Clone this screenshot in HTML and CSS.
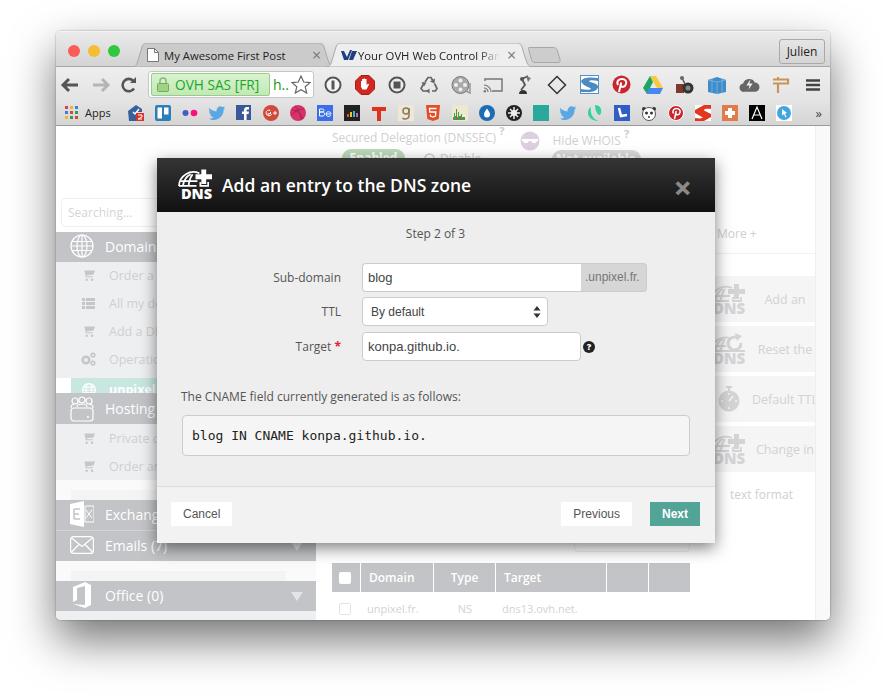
FILE: index.html
```html
<!DOCTYPE html>
<html lang="en">

<head>
    <meta charset="UTF-8">
    <meta name="viewport" content="width=device-width, initial-scale=1.0">
    <title>Your OVH Web Control Panel</title>
    <link rel="stylesheet" href="styles.css">
</head>

<body>
    <svg class="defs" width="0" height="0">
        <symbol id="cart" viewBox="0 0 14 14">
            <path d="M0 1.5h2.6l1.5 7.5h7.4l.4-1.2H5.2L5 6.8l7.4-.8L14 1.5H3.2z" fill="currentColor"/>
            <circle cx="5" cy="11.5" r="1.3" fill="currentColor"/>
            <circle cx="10.8" cy="11.5" r="1.3" fill="currentColor"/>
        </symbol>
        <symbol id="dns" viewBox="0 0 36 32">
            <path d="M1 18a15 15 0 0 1 21-13M1 18h18M5 18c1-6 4-10 8-12M11 18c0-5 2-9 4-12M3 13h17" fill="none" stroke="currentColor" stroke-width="1.8"/>
            <path d="M24 1h5v5h6v5h-6v5h-5v-5h-6V6h6z" fill="currentColor"/>
            <path d="M23 14v4h8v-4" fill="none" stroke="currentColor" stroke-width="1.8"/>
            <text class="dns-word" x="3" y="31">DNS</text>
        </symbol>
        <symbol id="dnsreset" viewBox="0 0 36 32">
            <path d="M1 18a15 15 0 0 1 19-13M1 18h34M5 18c1-6 4-10 8-12M11 18c0-5 2-9 4-12M3 13h13" fill="none" stroke="currentColor" stroke-width="1.8"/>
            <path d="M31 10a6.500 6.500 0 1 1-3-5" fill="none" stroke="currentColor" stroke-width="3"/>
            <path d="M25 0l7 3-5 5z" fill="currentColor"/>
            <text class="dns-word" x="3" y="31">DNS</text>
        </symbol>
    </svg>

    <div class="window">
        <div class="tabstrip">
            <div class="lights">
                <span class="light red"></span>
                <span class="light yellow"></span>
                <span class="light green"></span>
            </div>
            <div class="tab tab-off">
                <svg class="tab-shape" viewBox="0 0 203 24" preserveAspectRatio="none"><path d="M0 24C5 24 5 20 7 14L10 4C11 1 12 0 16 0H186C190 0 191 1 192 4L195 14C197 20 198 24 203 24Z" fill="#cbcbcb" stroke="#a8a8a8"/></svg>
                <svg class="tab-icon" width="12" height="14" viewBox="0 0 12 14"><path d="M.5.5h7l4 4v9H.5z" fill="#fff" stroke="#777"/><path d="M7.500.5v4h4" fill="none" stroke="#777"/></svg>
                <span class="tab-title">My Awesome First Post</span>
                <span class="tab-close">×</span>
            </div>
            <div class="tab tab-on">
                <svg class="tab-shape" viewBox="0 0 207 24" preserveAspectRatio="none"><path d="M0 24C5 24 5 20 7 14L10 4C11 1 12 0 16 0H190C194 0 195 1 196 4L199 14C201 20 202 24 207 24Z" fill="#eeeeee" stroke="#a8a8a8"/></svg>
                <svg class="tab-icon ovh" width="16" height="10" viewBox="0 0 16 10"><path d="M0 1h3l3 6 3-7h2L7 10H3zM11 1h5l-4 9H8z" fill="#1f3f80"/></svg>
                <span class="tab-title fade">Your OVH Web Control Pan</span>
                <span class="tab-close">×</span>
            </div>
            <svg class="newtab" width="33" height="17" viewBox="0 0 33 17"><path d="M1 1.500h24c2 0 3 .5 4 2l3 10c.5 2 0 3-2 3H7c-2 0-3-1-3.500-2.500L.5 3c-.5-1 0-1.500.5-1.500z" fill="#cdcdcd" stroke="#a8a8a8"/></svg>
            <div class="user">Julien</div>
        </div>

        <div class="toolbar">
            <svg class="nav" width="20" height="16" viewBox="0 0 20 16"><path d="M9 2L3 8l6 6M3 8h15" fill="none" stroke="#555" stroke-width="3"/></svg>
            <svg class="nav" width="20" height="16" viewBox="0 0 20 16"><path d="M11 2l6 6-6 6M17 8H2" fill="none" stroke="#b5b5b5" stroke-width="3"/></svg>
            <svg class="nav" width="18" height="16" viewBox="0 0 18 16"><path d="M14 11.500A6.200 6.200 0 1 1 13.500 4" fill="none" stroke="#555" stroke-width="2.600"/><path d="M10 6h6V0z" fill="#555"/></svg>
            <div class="omnibox">
                <div class="ev">
                    <svg width="12" height="15" viewBox="0 0 12 15"><path d="M3 7V4a3 3 0 0 1 6 0v3" fill="none" stroke="#8db57a" stroke-width="1.500"/><rect x=".5" y="6.500" width="11" height="8" rx="1" fill="#9fd383" stroke="#76a85f"/></svg>
                    <span>OVH SAS [FR]</span>
                </div>
                <span class="url">h..</span>
                <svg class="star" width="20" height="19" viewBox="0 0 20 19"><path d="M10 1l2.700 6 6.300.6-4.800 4.200 1.500 6.200-5.700-3.300L4.300 18l1.500-6.200L1 7.600 7.300 7z" fill="#fff" stroke="#666" stroke-width="1.200"/></svg>
            </div>
            <div class="extensions">
                <span class="ext"><svg width="18" height="18" viewBox="0 0 18 18"><circle cx="9" cy="9" r="7.500" fill="#f4f4f4" stroke="#555" stroke-width="2"/><path d="M7.500 4.500h3v9h-3z" fill="#555"/></svg></span>
                <span class="ext"><svg width="20" height="20" viewBox="0 0 20 20"><path d="M6 .5h8L19.500 6v8L14 19.500H6L.5 14V6z" fill="#d3261e" stroke="#a81d17"/><path d="M6 9V6l1 0v3-5h1.500v5-5.500H10V9 4h1.500v6l1.500-1.500 1 1-2.500 5H7.500L6 12z" fill="#fff"/></svg></span>
                <span class="ext"><svg width="18" height="18" viewBox="0 0 18 18"><circle cx="9" cy="9" r="7.500" fill="#eee" stroke="#555" stroke-width="2"/><rect x="5.500" y="5.500" width="7" height="7" fill="#555"/></svg></span>
                <span class="ext"><svg width="18" height="18" viewBox="0 0 18 18"><g fill="none" stroke="#666" stroke-width="1.700"><path d="M5 6l3-4.500h3l2 3.500"/><path d="M14.500 7.500l2.500 5-1.500 2.500H12"/><path d="M8 15H3l-2-2.500L3.500 8"/></g><path d="M15 2.500l-.5 5-4.500-2zM9.500 12.500v5L6 15zM1.500 6l5 .5-2.500 4z" fill="#666"/></svg></span>
                <span class="ext"><svg width="20" height="20" viewBox="0 0 20 20"><circle cx="9.500" cy="10" r="8.500" fill="#aaa" stroke="#777"/><circle cx="9.500" cy="5.500" r="2" fill="#eee"/><circle cx="5" cy="10" r="2" fill="#eee"/><circle cx="14" cy="10" r="2" fill="#eee"/><circle cx="9.500" cy="14.500" r="2" fill="#eee"/><path d="M15 16l4 2V8" fill="none" stroke="#999" stroke-width="1.500"/></svg></span>
                <span class="ext"><svg width="20" height="16" viewBox="0 0 20 16"><path d="M2 4V2h17v12H9" fill="none" stroke="#777" stroke-width="1.500"/><path d="M1 8a7 7 0 0 1 7 7M1 11a4 4 0 0 1 4 4" fill="none" stroke="#777" stroke-width="1.200"/><circle cx="1.800" cy="14.200" r="1.200" fill="#777"/></svg></span>
                <span class="ext"><svg width="16" height="20" viewBox="0 0 16 20"><path d="M5 4l6-3M5 4l3 6-4 5" fill="none" stroke="#555" stroke-width="1.800"/><path d="M9 1l5 2-3 4z" fill="#777"/><path d="M2 19c0-3 2-4 4-4s4 1 4 4z" fill="#333"/><circle cx="5" cy="4" r="2" fill="#555"/></svg></span>
                <span class="ext"><svg width="20" height="20" viewBox="0 0 20 20"><path d="M10 1.500l8.500 8.500-8.500 8.500L1.500 10z" fill="none" stroke="#333" stroke-width="1.500"/></svg></span>
                <span class="ext"><svg width="19" height="19" viewBox="0 0 19 19"><rect x=".5" y=".5" width="18" height="18" fill="#fff" stroke="#5a8fc0"/><path d="M1 6c2-4 10-4 17-3v3c-4-1-8-1-9 0s8 2 9 5-4 7-12 6H1v-3c4 1 9 1 10 0S2 11 1 6z" fill="#4b8bc4"/></svg></span>
                <span class="ext"><svg width="19" height="19" viewBox="0 0 19 19"><circle cx="9.500" cy="9.500" r="9" fill="#c9252d"/><path d="M7 17l2.200-9.500M6 10C4 6 7 4 10 4c3.500 0 5 2.500 4 5-1 3.500-4.500 3.500-5 1.500" fill="none" stroke="#fff" stroke-width="2"/></svg></span>
                <span class="ext"><svg width="20" height="18" viewBox="0 0 20 18"><path d="M7 0h6l7 12h-6z" fill="#f7c93f"/><path d="M7 0l3 6-6 12L0 12z" fill="#1fa463"/><path d="M6.500 12H20l-3 6H3.500z" fill="#4687f4"/></svg></span>
                <span class="ext"><svg width="20" height="20" viewBox="0 0 20 20"><rect x="1" y="9" width="8" height="9" fill="#7c3a2a"/><circle cx="13" cy="13" r="5.500" fill="#333"/><circle cx="13" cy="13" r="2.500" fill="#888"/><path d="M7 3l3 6" stroke="#555" stroke-width="1.500"/><circle cx="7" cy="3" r="2" fill="#666"/></svg></span>
                <span class="ext"><svg width="20" height="18" viewBox="0 0 20 18"><path d="M1 4l9-3 9 3v12l-9 2-9-2z" fill="#3f8ccb"/><path d="M1 4l9 2 9-2M10 6v12M5 2.700v14M15 2.700v14" fill="none" stroke="#7db6e3" stroke-width=".8"/></svg></span>
                <span class="ext"><svg width="21" height="17" viewBox="0 0 20 16"><path d="M5 15A4 4 0 0 1 4 7a6 6 0 0 1 11-1 4.500 4.500 0 0 1 0 9z" fill="#666"/><path d="M11 3L7 9h3l-1 4 4-6h-3z" fill="#eee"/></svg></span>
                <span class="ext"><svg width="18" height="18" viewBox="0 0 18 18"><path d="M1 3.500h15v4H1M6 7.500V17" fill="none" stroke="#cb9457" stroke-width="2.200"/><path d="M6 1v2" stroke="#cb9457" stroke-width="2"/></svg></span>
                <span class="ext"><svg width="14" height="12" viewBox="0 0 14 12"><path d="M0 1.500h14M0 6h14M0 10.500h14" stroke="#444" stroke-width="2.400"/></svg></span>
            </div>
        </div>

        <div class="bookmarks">
            <span class="apps">
                <svg width="13" height="13" viewBox="0 0 13 13"><rect width="3" height="3" fill="#d9453a"/><rect x="5" width="3" height="3" fill="#f0b429"/><rect x="10" width="3" height="3" fill="#3b7ded"/><rect y="5" width="3" height="3" fill="#3b7ded"/><rect x="5" y="5" width="3" height="3" fill="#d9453a"/><rect x="10" y="5" width="3" height="3" fill="#2ba24c"/><rect y="10" width="3" height="3" fill="#f0b429"/><rect x="5" y="10" width="3" height="3" fill="#2ba24c"/><rect x="10" y="10" width="3" height="3" fill="#d9453a"/></svg>
                Apps
            </span>
            <div class="marks">
                <svg width="16" height="16" viewBox="0 0 16 16"><path d="M0 6l8-6 6 4v3H8v9H1z" fill="#35619f"/><path d="M5 7l2 2 4-5" fill="none" stroke="#fff" stroke-width="1.500"/><rect x="8" y="8" width="8" height="8" fill="#d4362c"/><path d="M10 10h4v2l-4 2h4" fill="none" stroke="#fff"/></svg>
                <svg width="16" height="16" viewBox="0 0 16 16"><rect width="16" height="16" rx="2" fill="#2c7fb8"/><rect x="2.500" y="2.500" width="4.500" height="11" fill="#fff"/><rect x="9" y="2.500" width="4.500" height="7" fill="#fff"/></svg>
                <svg width="16" height="16" viewBox="0 0 16 16"><circle cx="3.500" cy="8" r="3" fill="#3f5fc4"/><circle cx="12" cy="8" r="3.300" fill="#fa0f7c"/></svg>
                <svg width="16" height="16" viewBox="0 0 16 16"><path d="M0 3c2 2 4 3 7.500 3.500C7 3 11-.5 13.500 2L16 1.500 14.500 3.500 16 3.200 14.500 5C15 10 10 15 5 15c-2 0-3.500-.5-5-1.500 2 0 3.500-.5 4.500-1.500C3 12 1.500 11 1 9.500h1.500C1 9 .2 7.500 0 6c.5.200 1 .4 1.500.4C0 5.500-.3 4.500 0 3z" fill="#5aa7e6"/></svg>
                <svg width="16" height="16" viewBox="0 0 16 16"><rect width="15" height="15" fill="#3b5998"/><path d="M8 15V9H6V6.500h2V5c0-2 1.200-3 3-3h2v2.500h-1.500c-.7 0-.9.300-.9 1V6.500H13L12.600 9h-2v6z" fill="#fff"/></svg>
                <svg width="16" height="16" viewBox="0 0 16 16"><circle cx="8" cy="8" r="8" fill="#d1493c"/><path d="M7.500 7v1.800h-2.700c.3 2 3 2.500 3.800.5M7.300 5.500A2.800 2.800 0 1 0 7 10.500" fill="none" stroke="#fff" stroke-width="1"/><path d="M10 8h4M12 6v4" stroke="#fff"/></svg>
                <svg width="16" height="16" viewBox="0 0 16 16"><circle cx="8" cy="8" r="8" fill="#d6336c"/><path d="M2 5c4 0 9 3 11 9M5 1c3 3 6 8 6 14M1 10c3-3 8-6 13-6" fill="none" stroke="#a01f4e" stroke-width=".8"/></svg>
                <svg width="16" height="16" viewBox="0 0 16 16"><rect width="16" height="16" fill="#3b6fe8"/><path d="M2.500 4h3c2 0 2 3 0 3h-3zM2.500 7h3.500c2 0 2 4 0 4H2.500zM9 9h5c0-3-5-3-5 0s4 3 5 1" fill="none" stroke="#fff"/></svg>
                <svg width="16" height="16" viewBox="0 0 16 16"><rect width="16" height="16" fill="#222"/><rect x="3" y="9" width="2" height="3" fill="#e04f4f"/><rect x="6" y="7" width="2" height="5" fill="#f0c419"/><rect x="9" y="6" width="2" height="6" fill="#35b6c9"/><rect x="12" y="8" width="2" height="4" fill="#c45ec9"/></svg>
                <svg width="16" height="16" viewBox="0 0 16 16"><path d="M1 2h14v4h-5v10H6V6H1z" fill="#e2321c"/></svg>
                <svg width="16" height="16" viewBox="0 0 16 16"><rect width="16" height="16" fill="#efe6d5"/><circle cx="8" cy="6" r="3" fill="none" stroke="#8a7a5a" stroke-width="1.500"/><path d="M11 3v8c0 3-5 4-6.500 2" fill="none" stroke="#8a7a5a" stroke-width="1.500"/></svg>
                <svg width="16" height="16" viewBox="0 0 16 16"><path d="M1 0h14l-1.300 14L8 16l-5.700-2z" fill="#e44d26"/><path d="M11.500 3.500h-7l.3 3.500h6l-.3 4L8 12l-2.500-1-.1-1.500" fill="none" stroke="#fff" stroke-width="1.300"/></svg>
                <svg width="16" height="16" viewBox="0 0 16 16"><rect width="16" height="16" fill="#efe8cf"/><path d="M1 15V12h1V8h1v3h1V4h1v8h1V7h1v4h2V9h1v3h3v3z" fill="#3aa24c"/><path d="M4 15V10h1v5zM8 15v-3h1v3z" fill="#d9453a"/></svg>
                <svg width="16" height="16" viewBox="0 0 16 16"><circle cx="8" cy="8" r="8" fill="#1d6db5"/><path d="M8 3.500c2 3 3 4.500 3 6a3 3 0 0 1-6 0c0-1.500 1-3 3-6z" fill="#fff"/></svg>
                <svg width="16" height="16" viewBox="0 0 16 16"><circle cx="8" cy="8" r="8" fill="#222"/><circle cx="8" cy="8" r="3" fill="#eee"/><path d="M8 2v12M2 8h12M4 4l8 8M12 4l-8 8" stroke="#eee" stroke-width="1.500"/></svg>
                <svg width="16" height="16" viewBox="0 0 16 16"><rect width="16" height="16" fill="#2aa89a"/></svg>
                <svg width="16" height="16" viewBox="0 0 16 16"><path d="M0 3c2 2 4 3 7.500 3.500C7 3 11-.5 13.500 2L16 1.500 14.500 3.500 16 3.200 14.500 5C15 10 10 15 5 15c-2 0-3.500-.5-5-1.500 2 0 3.500-.5 4.500-1.500C3 12 1.500 11 1 9.500h1.500C1 9 .2 7.500 0 6c.5.200 1 .4 1.500.4C0 5.500-.3 4.500 0 3z" fill="#5aa7e6"/></svg>
                <svg width="16" height="16" viewBox="0 0 16 16"><path d="M8 0c5 0 7 4 6 8-1 3-3 2-4 0s-2-4-2-8zM4 2c-1 6 1 11 7 14-6 0-10-4-10-8 0-3 1-5 3-6z" fill="#35d29a"/></svg>
                <svg width="16" height="16" viewBox="0 0 16 16"><rect width="16" height="16" fill="#2f5fc4"/><path d="M5 3l2 8 6-1" fill="none" stroke="#fff" stroke-width="2.500"/></svg>
                <svg width="16" height="16" viewBox="0 0 16 16"><circle cx="3" cy="4" r="2" fill="#333"/><circle cx="13" cy="4" r="2" fill="#333"/><circle cx="8" cy="9" r="6.500" fill="#fff" stroke="#555"/><circle cx="5.500" cy="8" r="1.500" fill="#333"/><circle cx="10.500" cy="8" r="1.500" fill="#333"/><circle cx="8" cy="12" r="1" fill="#333"/></svg>
                <svg width="16" height="16" viewBox="0 0 16 16"><circle cx="8" cy="8" r="7.500" fill="#c9252d" stroke="#fff"/><path d="M6.500 14l1.700-8M5.500 8.500C4 5.500 6 3.500 8.500 3.500c3 0 4 2 3.500 4-.8 2.800-3.500 2.800-4 1.200" fill="none" stroke="#fff" stroke-width="1.500"/></svg>
                <svg width="16" height="16" viewBox="0 0 16 16"><rect width="16" height="16" fill="#fff"/><path d="M16 0v4C9 3 8 5 10 6l6 3v3L9 16H0v-3c6 1 9 0 7-1L0 8V5L9 0z" fill="#e2371f"/></svg>
                <svg width="16" height="16" viewBox="0 0 16 16"><rect width="16" height="16" fill="#e07b4a"/><path d="M6 3h4v3h3v4h-3v3H6v-3H3V6h3z" fill="#fff"/></svg>
                <svg width="16" height="16" viewBox="0 0 16 16"><rect width="16" height="16" fill="#000"/><path d="M3 14L8 2l5 12M5 10h6" fill="none" stroke="#fff" stroke-width="1.200"/></svg>
                <svg width="16" height="16" viewBox="0 0 16 16"><rect width="16" height="16" fill="#fff"/><circle cx="8" cy="8" r="7" fill="#42a5e2"/><path d="M6 4l5 4-2 .5L10.500 12l-1 .5L8 9l-2 1.500z" fill="#fff"/></svg>
            </div>
            <span class="more">»</span>
        </div>

        <div class="page">
            <aside class="sidebar">
                <div class="search">Searching...</div>

                <div class="menu-head">
                    <svg width="24" height="24" viewBox="0 0 24 24"><g fill="none" stroke="#fff" stroke-width="1.200"><circle cx="12" cy="12" r="11"/><ellipse cx="12" cy="12" rx="5" ry="11"/><path d="M12 1v22M2 7.500h20M1 12h22M2 16.500h20"/></g></svg>
                    <span>Domain</span>
                </div>
                <ul class="menu-list pad">
                    <li><svg width="13" height="13"><use href="#cart"/></svg><span>Order a</span></li>
                    <li><svg width="13" height="13" viewBox="0 0 13 13"><path d="M0 1h3v3H0zM4 1h9v3H4zM0 5h3v3H0zM4 5h9v3H4zM0 9h3v3H0zM4 9h9v3H4z" fill="currentColor"/></svg><span>All my do</span></li>
                    <li><svg width="13" height="13"><use href="#cart"/></svg><span>Add a DN</span></li>
                    <li><svg width="15" height="14" viewBox="0 0 15 14"><circle cx="5" cy="8" r="3.300" fill="none" stroke="currentColor" stroke-width="2.600"/><circle cx="12" cy="3" r="1.800" fill="none" stroke="currentColor" stroke-width="1.600"/><circle cx="12" cy="11" r="1.800" fill="none" stroke="currentColor" stroke-width="1.600"/></svg><span>Operatio</span></li>
                </ul>
                <div class="menu-active">
                    <svg width="14" height="14" viewBox="0 0 24 24"><g fill="none" stroke="#fff" stroke-width="2"><circle cx="12" cy="12" r="11"/><ellipse cx="12" cy="12" rx="5" ry="11"/><path d="M1 12h22M2 7h20M2 17h20"/></g></svg>
                    <span>unpixel.f</span>
                </div>

                <div class="menu-head tall">
                    <svg width="24" height="26" viewBox="0 0 24 26"><g fill="none" stroke="#fff" stroke-width="1.200"><circle cx="5" cy="5" r="3"/><circle cx="12" cy="4" r="3"/><circle cx="19" cy="5" r="3"/><path d="M1 12c0-3 2-4 4-4M23 12c0-3-2-4-4-4M7 11c0-2 2-3 5-3s5 1 5 3"/><rect x="1" y="12" width="22" height="13" rx="3"/></g><circle cx="18" cy="21" r="1" fill="#fff"/></svg>
                    <span>Hosting</span>
                </div>
                <ul class="menu-list">
                    <li><svg width="13" height="13"><use href="#cart"/></svg><span>Private d</span></li>
                    <li><svg width="13" height="13"><use href="#cart"/></svg><span>Order an</span></li>
                </ul>
                <div class="menu-gap"><div class="gap-row"></div></div>

                <div class="menu-head">
                    <svg width="24" height="26" viewBox="0 0 24 26"><path d="M0 3l14-3v26L0 23z" fill="#fff"/><path d="M15 5h9v16h-9z" fill="none" stroke="#fff"/><path d="M4 8h6M4 13h5M4 18h6M4 8v10" stroke="#c3c4c7" stroke-width="1.500" fill="none"/><path d="M16 9l6 8M22 9l-6 8" stroke="#fff"/></svg>
                    <span>Exchang</span>
                </div>
                <div class="menu-head line">
                    <svg width="24" height="18" viewBox="0 0 24 18"><g fill="none" stroke="#fff" stroke-width="1.200"><rect x=".6" y=".6" width="22.800" height="16.800" rx="3"/><path d="M1 1.500l11 9 11-9M1 16.500l8-8M23 16.500l-8-8"/></g></svg>
                    <span>Emails (7)</span>
                    <i class="caret"></i>
                </div>
                <div class="menu-gap"><div class="gap-row"></div></div>

                <div class="menu-head">
                    <svg width="20" height="26" viewBox="0 0 20 26"><path d="M1 5l12-5 6 3v20l-6 3-12-4 12 1V4L5 6v12l-4 2z" fill="#fff"/></svg>
                    <span>Office (0)</span>
                    <i class="caret"></i>
                </div>
                <div class="menu-tail"></div>
            </aside>

            <main class="content">
                <div class="options">
                    <div class="option">
                        <div class="option-name">Secured Delegation (DNSSEC) <sup>?</sup></div>
                        <div class="option-state"><span class="pill on">Enabled</span><span class="disable"><svg width="11" height="11" viewBox="0 0 11 11"><circle cx="5.500" cy="5.500" r="4.500" fill="none" stroke="#ccc" stroke-width="1.500"/></svg>Disable</span></div>
                    </div>
                    <svg class="mask" width="20" height="20" viewBox="0 0 20 20"><circle cx="10" cy="10" r="9.500" fill="#dccfe0"/><path d="M2 8h16v2h-1c-.5 3-5 3-6 0H9c-1 3-5.500 3-6 0H2z" fill="#fff"/></svg>
                    <div class="option">
                        <div class="option-name">Hide WHOIS <sup>?</sup></div>
                        <div class="option-state"><span class="pill off">Not available</span></div>
                    </div>
                </div>

                <div class="more-tab">More +</div>

                <div class="cards">
                    <div class="card"><svg width="36" height="32"><use href="#dns"/></svg><span>Add an</span></div>
                    <div class="card"><svg width="36" height="32"><use href="#dnsreset"/></svg><span>Reset the</span></div>
                    <div class="card"><svg class="watch" width="22" height="26" viewBox="0 0 22 26"><path d="M8 0h6v2H8z" fill="currentColor"/><path d="M11 2v3" stroke="currentColor" stroke-width="2"/><circle cx="11" cy="15" r="10.500" fill="currentColor"/><path d="M11 15l4-5" stroke="#f5f5f5" stroke-width="1.500"/><circle cx="11" cy="8" r="1" fill="#f5f5f5"/><circle cx="4" cy="15" r="1" fill="#f5f5f5"/><circle cx="11" cy="22" r="1" fill="#f5f5f5"/><circle cx="18" cy="15" r="1" fill="#f5f5f5"/></svg><span>Default TTL</span></div>
                    <div class="card"><svg width="36" height="32"><use href="#dns"/></svg><span>Change in</span></div>
                    <div class="card-note">text format</div>
                </div>

                <div class="pager"></div>

                <table class="records">
                    <thead>
                        <tr>
                            <th class="col-check"><span class="check"></span></th>
                            <th class="col-domain">Domain</th>
                            <th class="col-type">Type</th>
                            <th class="col-target">Target</th>
                            <th class="col-a"></th>
                            <th class="col-b"></th>
                        </tr>
                    </thead>
                    <tbody>
                        <tr>
                            <td class="col-check"><span class="check light-check"></span></td>
                            <td>unpixel.fr.</td>
                            <td class="center">NS</td>
                            <td>dns13.ovh.net.</td>
                            <td></td>
                            <td></td>
                        </tr>
                    </tbody>
                </table>
            </main>

            <div class="rail"></div>
        </div>

        <!-- dialog sits over the page -->
        <div class="modal">
            <div class="modal-head">
                <svg class="modal-logo" width="35" height="32"><use href="#dns"/></svg>
                <h2>Add an entry to the DNS zone</h2>
                <span class="modal-close">×</span>
            </div>
            <div class="modal-body">
                <p class="step">Step 2 of 3</p>
                <div class="field">
                    <label>Sub-domain</label>
                    <div class="input-group">
                        <div class="input">blog</div>
                        <div class="addon">.unpixel.fr.</div>
                    </div>
                </div>
                <div class="field">
                    <label>TTL</label>
                    <div class="select"><span>By default</span>
                        <svg width="8" height="12" viewBox="0 0 8 12"><path d="M4 0l3.500 4.500h-7zM4 12L.5 7.500h7z" fill="#333"/></svg>
                    </div>
                </div>
                <div class="field">
                    <label>Target <em>*</em></label>
                    <div class="input input-wide">konpa.github.io.</div>
                    <span class="help">?</span>
                </div>
                <p class="hint">The CNAME field currently generated is as follows:</p>
                <pre class="result">blog IN CNAME konpa.github.io.</pre>
            </div>
            <div class="modal-foot">
                <button class="btn">Cancel</button>
                <span class="spacer"></span>
                <button class="btn">Previous</button>
                <button class="btn btn-next">Next</button>
            </div>
        </div>
    </div>
</body>

</html>
```

FILE: styles.css
```css
/* General Styles */
* {
    box-sizing: border-box;
}

html,
body {
    height: 700px;
    overflow: hidden;
}

body {
    margin: 0;
    background-color: #fff;
    font-family: "Open Sans", sans-serif;
}

.defs {
    position: absolute;
}

.dns-word {
    font-family: "Open Sans", sans-serif;
    font-size: 15px;
    font-weight: 800;
    fill: currentColor;
}

/* Browser window */
.window {
    position: relative;
    width: 774px;
    height: 589px;
    margin: 31px 0 0 56px;
    border-radius: 5px;
    overflow: hidden;
    display: flex;
    flex-direction: column;
    background: #fff;
}

body::before {
    content: "";
    position: absolute;
    left: 56px;
    top: 31px;
    width: 774px;
    height: 589px;
    border-radius: 5px;
    box-shadow: 0 20px 45px rgba(0, 0, 0, 0.55), 0 0 2px rgba(0, 0, 0, 0.4);
}

.tabstrip {
    height: 36px;
    flex: none;
    display: flex;
    align-items: flex-end;
    background: linear-gradient(#ebebeb, #d3d3d3);
    border-top: 1px solid #f4f4f4;
    border-bottom: 1px solid #a6a6a6;
    position: relative;
}

.lights {
    display: flex;
    gap: 8px;
    padding-left: 12px;
    width: 76px;
    align-self: flex-start;
    margin-top: 13px;
}

.light {
    width: 12px;
    height: 12px;
    border-radius: 50%;
}

.red { background: #fc5b57; }
.yellow { background: #f5bd30; }
.green { background: #30c83f; }

.tab {
    position: relative;
    height: 24px;
    display: flex;
    align-items: center;
    font-size: 11.300px;
    color: #222;
    margin-bottom: -1px;
}

.tab-off {
    width: 203px;
    padding-left: 15px;
}

.tab-on {
    width: 207px;
    margin-left: -9px;
    padding-left: 15px;
}

.tab-shape {
    position: absolute;
    left: 0;
    top: 0;
    width: 100%;
    height: 100%;
}

.tab-icon,
.tab-title,
.tab-close {
    position: relative;
}

.tab-title {
    margin-left: 5px;
    white-space: nowrap;
    width: 148px;
}

.tab-on .tab-title {
    margin-left: 1px;
    width: 142px;
}

.tab-close {
    font-size: 16px;
    color: #777;
    line-height: 1;
}

.tab-on .tab-close {
    margin-left: 7px;
}

.fade {
    -webkit-mask-image: linear-gradient(to right, #000 85%, transparent);
    mask-image: linear-gradient(to right, #000 85%, transparent);
}

.newtab {
    margin-left: -5px;
    margin-bottom: 3px;
    flex: none;
}

.user {
    margin-left: auto;
    margin-right: 5px;
    align-self: flex-start;
    margin-top: 7px;
    width: 46px;
    height: 25px;
    border: 1px solid #a9a9a9;
    border-radius: 3px;
    font-size: 12px;
    line-height: 23px;
    text-align: center;
    color: #222;
}

.toolbar {
    height: 33px;
    flex: none;
    display: flex;
    align-items: center;
    padding: 2px 0 0 4px;
    background: linear-gradient(#eeeeee, #e4e4e4);
}

.nav {
    flex: none;
    margin-right: 11px;
}

.toolbar .nav:nth-child(2) {
    margin-right: 9px;
}

.toolbar .nav:nth-child(3) {
    margin-right: 10px;
}

.omnibox {
    width: 166px;
    height: 27px;
    padding: 2px;
    display: flex;
    align-items: center;
    background: #fff;
    border: 1px solid #c6c6c6;
    border-radius: 3px;
    flex: none;
}

.ev {
    width: 119px;
    height: 23px;
    display: flex;
    align-items: center;
    gap: 6px;
    padding-left: 5px;
    background: linear-gradient(#d8f3cf, #c2e8b4);
    border: 1px solid #99cc88;
    border-radius: 2px;
    font-size: 13.700px;
    color: #20a52a;
    white-space: nowrap;
}

.url {
    margin-left: 3px;
    font-size: 14px;
    color: #119a15;
}

.star {
    margin-left: auto;
}

.extensions {
    display: flex;
    margin-left: 3px;
}

.ext {
    width: 32px;
    height: 24px;
    display: flex;
    align-items: center;
    justify-content: center;
}

.bookmarks {
    height: 26px;
    flex: none;
    display: flex;
    align-items: center;
    padding-left: 9px;
    background: linear-gradient(#e4e4e4, #d5d5d5);
    border-bottom: 1px solid #9a9a9a;
}

.apps {
    display: flex;
    align-items: center;
    gap: 7px;
    font-size: 11px;
    color: #222;
    width: 63px;
    flex: none;
}

.marks {
    display: flex;
    gap: 11px;
    flex: none;
}

.more {
    margin-left: auto;
    margin-right: 8px;
    font-size: 13px;
    color: #444;
}

/* Page behind the dialog */
.page {
    flex: 1;
    min-height: 0;
    display: flex;
}

.sidebar {
    width: 260px;
    flex: none;
    padding-top: 72px;
    color: #c9c9cb;
    font-size: 12.500px;
}

.search {
    width: 130px;
    height: 29px;
    margin: 0 0 5px 5px;
    padding-left: 6px;
    border: 1px solid #f0f0f0;
    border-radius: 4px;
    font-size: 12px;
    line-height: 27px;
    color: #d5d5d5;
}

.menu-head {
    position: relative;
    height: 30px;
    display: flex;
    align-items: center;
    gap: 11px;
    padding: 0 0 2px 14px;
    background: #c3c4c7;
    color: #fff;
    font-size: 14px;
    font-weight: 500;
}

.menu-head.tall {
    height: 31px;
    padding-bottom: 0;
}

.menu-head svg {
    width: 24px;
    flex: none;
}

.menu-head.line {
    height: 31px;
    border-top: 1px solid #d3d4d6;
}

.caret {
    position: absolute;
    right: 13px;
    top: 11px;
    border-left: 6px solid transparent;
    border-right: 6px solid transparent;
    border-top: 9px solid #e4e4e6;
}

.menu-list {
    list-style: none;
    margin: 0;
    padding: 0 0 0 25px;
    background: #eeeff0;
}

.menu-list.pad {
    padding-bottom: 4px;
}

.menu-list.pad li {
    padding-bottom: 2px;
}

.menu-list li {
    height: 28px;
    display: flex;
    align-items: center;
    gap: 13px;
    white-space: nowrap;
    color: #cfcfd1;
}

.menu-list svg {
    color: #c6c6c8;
    flex: none;
    width: 15px;
}

.menu-active {
    height: 15px;
    margin-left: 15px;
    padding: 5px 0 0 11px;
    display: flex;
    align-items: flex-start;
    gap: 13px;
    background: #c9e7e1;
    color: #fff;
    font-weight: 700;
    line-height: 14px;
    overflow: hidden;
}

.menu-gap {
    height: 20px;
    padding-top: 10px;
    background: #fafafa;
}

.gap-row {
    height: 10px;
    margin-left: 15px;
    margin-right: 30px;
    background: #f3f5f5;
}

.menu-tail {
    height: 9px;
    background: #eeeff0;
}

.content {
    width: 499px;
    flex: none;
    padding: 3px 0 0 16px;
    display: flex;
    flex-direction: column;
    color: #cfcfd1;
}

.content > * {
    flex: none;
}

.options {
    display: flex;
    height: 35px;
}

.option-name {
    font-size: 12px;
    white-space: nowrap;
    line-height: 18px;
}

.option-name sup {
    font-size: 11px;
    font-weight: 700;
    color: #ccc;
    line-height: 0;
    vertical-align: 7px;
}

.option-state {
    display: flex;
    align-items: center;
    gap: 19px;
    margin: 2px 0 0 10px;
}

.pill {
    height: 18px;
    border-radius: 9px;
    font-size: 12px;
    font-weight: 700;
    line-height: 18px;
    text-align: center;
    color: #fff;
    white-space: nowrap;
}

.pill.on {
    width: 63px;
    background: #bcd9b9;
}

.pill.off {
    width: 89px;
    background: #d9d9d9;
}

.disable {
    display: flex;
    align-items: center;
    gap: 5px;
    font-size: 12px;
}

.mask {
    margin: 2px 13px 0 15px;
    flex: none;
}

.option + .mask + .option .option-name {
    margin-top: 3px;
}

.option + .mask + .option .option-state {
    margin: 0 0 0 -1px;
}

.more-tab {
    align-self: flex-end;
    width: 100px;
    height: 90px;
    padding: 61px 0 0 2px;
    font-size: 12px;
    border-bottom: 1px solid #f2f2f2;
}

.cards {
    align-self: flex-end;
    width: 100px;
    margin-top: 22px;
    display: flex;
    flex-direction: column;
    gap: 4px;
}

.card {
    height: 46px;
    display: grid;
    grid-template-columns: 40px 60px;
    align-items: center;
    background: #f5f5f5;
    font-size: 12.500px;
    white-space: nowrap;
    overflow: hidden;
    color: #d2d2d4;
}

.card svg {
    margin-left: -5px;
    color: #d4d4d6;
}

.card .watch {
    margin-left: 3px;
}

.card span {
    justify-self: center;
}

.card-note {
    padding: 10px 0 0 15px;
    font-size: 12px;
}

.pager {
    align-self: flex-end;
    width: 116px;
    height: 22px;
    margin: 27px 125px 0 0;
    border: 1px solid #eeeeee;
    border-radius: 4px;
}

.records {
    margin-top: 11px;
    width: 358px;
    border-collapse: separate;
    border-spacing: 0;
    table-layout: fixed;
    font-size: 12px;
}

.records th {
    height: 29px;
    padding: 0 0 0 8px;
    background: #c3c4c7;
    border-right: 1px solid #fff;
    color: #fff;
    font-weight: 600;
    text-align: left;
}

.records th:last-child {
    border-right: 0;
}

.records td {
    height: 28px;
    padding: 9px 0 0 6px;
    font-size: 11px;
    color: #d2d2d4;
    vertical-align: top;
}

.records .center,
.records .col-type {
    text-align: center;
    padding-left: 0;
}

.col-check { width: 29px; }
.col-domain { width: 73px; }
.col-type { width: 62px; }
.col-target { width: 111px; }
.col-a { width: 42px; }
.col-b { width: 41px; }

.records .col-check {
    padding-left: 7px;
}

.check {
    display: block;
    width: 12px;
    height: 12px;
    background: #fff;
    border-radius: 2px;
}

.light-check {
    border: 1px solid #e3e3e3;
    margin-top: 2px;
}

.rail {
    flex: 1;
    background: #f9f9f9;
    border-left: 1px solid #efefef;
}

/* Dialog */
.modal {
    position: absolute;
    left: 101px;
    top: 127px;
    width: 558px;
    height: 385px;
    display: flex;
    flex-direction: column;
    background: #eeeeee;
    box-shadow: 0 5px 15px rgba(0, 0, 0, 0.5);
    color: #555;
}

.modal-head {
    height: 54px;
    flex: none;
    display: flex;
    align-items: center;
    padding-left: 21px;
    background: linear-gradient(#353535, #111111);
    color: #fff;
}

.modal-logo {
    flex: none;
    color: #fff;
    margin-top: -2px;
}

.modal-head h2 {
    margin: -1px 0 0 9px;
    font-size: 17.500px;
    font-weight: 600;
    white-space: nowrap;
}

.modal-close {
    margin-left: auto;
    margin-right: 23px;
    font-family: "DejaVu Sans", sans-serif;
    font-size: 22px;
    font-weight: 700;
    line-height: 1;
    color: #8a8a8a;
    -webkit-text-stroke: 1px #8a8a8a;
    margin-top: 5px;
}

.modal-body {
    flex: 1;
    padding: 0 25px 0 24px;
    font-size: 12px;
}

.step {
    margin: 14px 0 0 0;
    height: 37px;
    text-align: center;
    line-height: 16px;
}

.field {
    display: flex;
    align-items: center;
    height: 29px;
    margin-bottom: 5px;
}

.field + .field {
    margin-bottom: 6px;
}

.field + .field + .field {
    margin-bottom: 0;
}

.field label {
    width: 160px;
    flex: none;
    text-align: right;
    font-size: 12px;
}

.field em {
    color: #e02040;
    font-style: normal;
    font-weight: 700;
}

.input-group {
    display: flex;
    margin-left: 21px;
}

.input,
.select {
    height: 29px;
    background: #fff;
    border: 1px solid #ccc;
    border-radius: 4px;
    font-family: "Liberation Sans", Arial, sans-serif;
    font-size: 13px;
    line-height: 27px;
    color: #444;
}

.input {
    width: 219px;
    padding-left: 5px;
}

.input-group .input {
    border-radius: 4px 0 0 4px;
    border-right: 0;
}

.input-wide {
    margin-left: 21px;
}

.addon {
    width: 66px;
    height: 29px;
    padding-left: 4px;
    background: #d6d6d6;
    border: 1px solid #ccc;
    border-left: 0;
    border-radius: 0 4px 4px 0;
    font-family: "Liberation Sans", Arial, sans-serif;
    font-size: 12px;
    line-height: 27px;
    color: #777;
    white-space: nowrap;
}

.select {
    width: 186px;
    margin-left: 21px;
    padding: 0 6px 0 8px;
    display: flex;
    align-items: center;
    justify-content: space-between;
    font-size: 12px;
}

.select span {
    padding-top: 2px;
}

.help {
    width: 12px;
    height: 12px;
    margin-left: 2px;
    border-radius: 50%;
    background: #222;
    color: #fff;
    font-size: 9px;
    font-weight: 800;
    line-height: 12px;
    text-align: center;
}

.hint {
    margin: 0;
    padding-top: 27px;
    line-height: 17px;
}

.result {
    width: 508px;
    height: 41px;
    margin: 10px 0 0 1px;
    padding: 0 9px;
    background: #f5f5f5;
    border: 1px solid #ccc;
    border-radius: 4px;
    font-family: "DejaVu Sans Mono", monospace;
    font-size: 13px;
    line-height: 39px;
    color: #222;
}

.modal-foot {
    height: 57px;
    flex: none;
    display: flex;
    align-items: flex-start;
    gap: 18px;
    padding: 15px 15px 0 14px;
    background: #f2f2f2;
    border-top: 1px solid #dcdcdc;
}

.spacer {
    flex: 1;
}

.btn {
    height: 24px;
    padding: 0 12px;
    background: #fff;
    border: none;
    font-family: "Liberation Sans", Arial, sans-serif;
    font-size: 12px;
    color: #555;
}

.btn-next {
    width: 50px;
    padding: 0;
    background: #52a596;
    color: #fff;
    font-weight: 700;
}
```
